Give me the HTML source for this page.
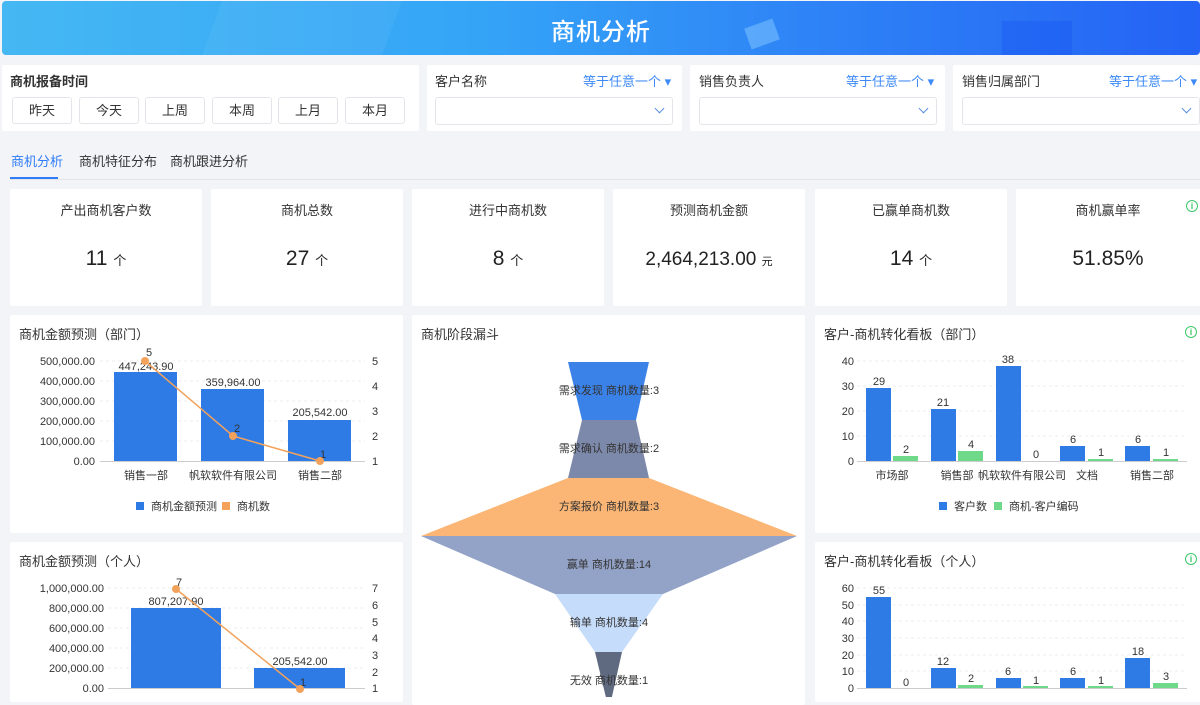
<!DOCTYPE html>
<html><head><meta charset="utf-8"><style>
*{margin:0;padding:0;box-sizing:border-box}
body{width:1200px;height:697px;overflow:hidden;background:#f3f4f8;font-family:"Liberation Sans","Noto Sans CJK SC",sans-serif;position:relative;color:#333}
.a{position:absolute}
.card{position:absolute;background:#fff;border-radius:2px}
.hdr{left:2px;top:1px;width:1198px;height:54px;border-radius:4px;background:linear-gradient(90deg,#45b8f3 0%,#34a4f7 40%,#2f86f6 65%,#2463f5 100%);overflow:hidden}
.hdr h1{position:absolute;left:0;right:0;top:11px;text-align:center;color:#fff;font-size:24px;font-weight:500;font-family:"Noto Sans CJK SC",sans-serif;letter-spacing:1px}
.btn{position:absolute;top:32px;width:60px;height:27px;border:1px solid #e3e5ea;border-radius:3px;font-size:13px;text-align:center;line-height:25px;color:#333}
.fl{font-size:13px;color:#333;position:absolute;top:6px}
.eq{font-size:13px;color:#3d8af7;position:absolute;top:6px}
.sel{position:absolute;top:32px;height:28px;border:1px solid #e3e5ea;border-radius:3px}
.chev{position:absolute;right:9px;top:7px;width:7px;height:7px;border-right:1.5px solid #5a8fe0;border-bottom:1.5px solid #5a8fe0;transform:rotate(45deg)}
.kt{position:absolute;top:11px;left:0;right:0;text-align:center;font-size:13px;color:#333}
.kv{position:absolute;top:58px;left:0;right:0;text-align:center;font-size:21px;color:#222}
.kv small{font-size:13px}
.ct{position:absolute;left:9px;top:9px;font-size:13px;color:#333}
.info{position:absolute;width:12px;height:12px;border:1.3px solid #3ec86a;border-radius:50%;color:#3ec86a;font-size:9px;line-height:10px;text-align:center;font-weight:bold}
svg text{font-family:"Liberation Sans","Noto Sans CJK SC",sans-serif}
</style></head><body>
<div class="a hdr">
<div class="a" style="left:210px;top:0;width:180px;height:54px;background:rgba(255,255,255,0.05);transform:skewX(-20deg)"></div>
<div class="a" style="left:745px;top:22px;width:30px;height:22px;background:rgba(120,190,255,0.6);transform:rotate(-20deg)"></div>
<div class="a" style="left:1000px;top:20px;width:70px;height:36px;background:rgba(20,80,240,0.3)"></div>
<h1>商机分析</h1></div>

<div class="card" style="left:2px;top:65px;width:417px;height:66px">
<div class="fl" style="left:8px;font-weight:600">商机报备时间</div>
<div class="btn" style="left:10px">昨天</div><div class="btn" style="left:77px">今天</div><div class="btn" style="left:143px">上周</div><div class="btn" style="left:210px">本周</div><div class="btn" style="left:276px">上月</div><div class="btn" style="left:343px">本月</div>
</div>
<div class="card" style="left:427px;top:65px;width:255px;height:66px"><div class="fl" style="left:8px">客户名称</div><div class="eq" style="left:156px">等于任意一个 ▾</div><div class="sel" style="left:8px;width:238px"><div class="chev"></div></div></div>
<div class="card" style="left:690px;top:65px;width:255px;height:66px"><div class="fl" style="left:9px">销售负责人</div><div class="eq" style="left:156px">等于任意一个 ▾</div><div class="sel" style="left:9px;width:238px"><div class="chev"></div></div></div>
<div class="card" style="left:953px;top:65px;width:247px;height:66px"><div class="fl" style="left:9px">销售归属部门</div><div class="eq" style="left:156px">等于任意一个 ▾</div><div class="sel" style="left:9px;width:238px"><div class="chev"></div></div></div>

<div class="a" style="left:11px;top:151px;font-size:13px;color:#2f7cf6">商机分析</div>
<div class="a" style="left:79px;top:151px;font-size:13px">商机特征分布</div>
<div class="a" style="left:170px;top:151px;font-size:13px">商机跟进分析</div>
<div class="a" style="left:10px;top:179px;width:1190px;height:1px;background:#e2e4ea"></div>
<div class="a" style="left:10px;top:177px;width:48px;height:2px;background:#2f7cf6"></div>

<div class="card" style="left:10px;top:189px;width:192px;height:117px"><div class="kt">产出商机客户数</div><div class="kv">11 <small>个</small></div></div>
<div class="card" style="left:211px;top:189px;width:192px;height:117px"><div class="kt">商机总数</div><div class="kv">27 <small>个</small></div></div>
<div class="card" style="left:412px;top:189px;width:192px;height:117px"><div class="kt">进行中商机数</div><div class="kv">8 <small>个</small></div></div>
<div class="card" style="left:613px;top:189px;width:192px;height:117px"><div class="kt">预测商机金额</div><div class="kv" style="font-size:19px;top:60px">2,464,213.00 <small style="font-size:11px">元</small></div></div>
<div class="card" style="left:815px;top:189px;width:192px;height:117px"><div class="kt">已赢单商机数</div><div class="kv">14 <small>个</small></div></div>
<div class="card" style="left:1016px;top:189px;width:184px;height:117px"><div class="kt">商机赢单率</div><div class="kv">51.85%</div><div class="info" style="left:170px;top:11px">i</div></div>

<div class="card" style="left:10px;top:315px;width:393px;height:218px"><div class="ct">商机金额预测（部门）</div></div>
<div class="card" style="left:10px;top:542px;width:393px;height:160px"><div class="ct">商机金额预测（个人）</div></div>
<div class="card" style="left:412px;top:315px;width:393px;height:390px"><div class="ct">商机阶段漏斗</div></div>
<div class="card" style="left:815px;top:315px;width:385px;height:218px"><div class="ct">客户-商机转化看板（部门）</div><div class="info" style="left:370px;top:11px">i</div></div>
<div class="card" style="left:815px;top:542px;width:385px;height:160px"><div class="ct">客户-商机转化看板（个人）</div><div class="info" style="left:370px;top:11px">i</div></div>

<svg class="a" style="left:0;top:0" width="1200" height="697" font-size="11" fill="#333">
<g stroke="#eee" stroke-dasharray="3,3"><line x1="100" y1="361" x2="365" y2="361"/><line x1="100" y1="381" x2="365" y2="381"/><line x1="100" y1="401" x2="365" y2="401"/><line x1="100" y1="421" x2="365" y2="421"/><line x1="100" y1="441" x2="365" y2="441"/></g>
<line x1="100" y1="461.5" x2="365" y2="461.5" stroke="#ccc"/>
<g text-anchor="end"><text x="95" y="365">500,000.00</text><text x="95" y="385">400,000.00</text><text x="95" y="405">300,000.00</text><text x="95" y="425">200,000.00</text><text x="95" y="445">100,000.00</text><text x="95" y="465">0.00</text></g>
<g><text x="372" y="365">5</text><text x="372" y="390">4</text><text x="372" y="415">3</text><text x="372" y="440">2</text><text x="372" y="465">1</text></g>
<g fill="#2e7be6"><rect x="114" y="372" width="63" height="89"/><rect x="201" y="389" width="63" height="72"/><rect x="288" y="420" width="63" height="41"/></g>
<g text-anchor="middle"><text x="146" y="370">447,243.90</text><text x="233" y="386">359,964.00</text><text x="320" y="416">205,542.00</text><text x="149" y="356">5</text><text x="237" y="432">2</text><text x="323" y="458">1</text>
<text x="146" y="479">销售一部</text><text x="233" y="479">帆软软件有限公司</text><text x="320" y="479">销售二部</text></g>
<polyline points="145,361 233,436 320,461" fill="none" stroke="#f3a25c" stroke-width="1.5"/>
<g fill="#f3a25c"><circle cx="145" cy="361" r="4"/><circle cx="233" cy="436" r="4"/><circle cx="320" cy="461" r="4"/></g>
<rect x="136" y="502" width="8" height="8" fill="#2e7be6"/><text x="151" y="510">商机金额预测</text>
<rect x="222" y="502" width="8" height="8" fill="#f3a25c"/><text x="237" y="510">商机数</text>
<g stroke="#eee" stroke-dasharray="3,3"><line x1="108" y1="588" x2="365" y2="588"/><line x1="108" y1="608" x2="365" y2="608"/><line x1="108" y1="628" x2="365" y2="628"/><line x1="108" y1="648" x2="365" y2="648"/><line x1="108" y1="668" x2="365" y2="668"/></g>
<line x1="108" y1="688.5" x2="365" y2="688.5" stroke="#ccc"/>
<g text-anchor="end"><text x="104" y="592">1,000,000.00</text><text x="104" y="612">800,000.00</text><text x="104" y="632">600,000.00</text><text x="104" y="652">400,000.00</text><text x="104" y="672">200,000.00</text><text x="104" y="692">0.00</text></g>
<g><text x="372" y="592">7</text><text x="372" y="609">6</text><text x="372" y="626">5</text><text x="372" y="642">4</text><text x="372" y="659">3</text><text x="372" y="676">2</text><text x="372" y="692">1</text></g>
<g fill="#2e7be6"><rect x="131" y="608" width="90" height="80"/><rect x="254" y="668" width="91" height="20"/></g>
<g text-anchor="middle"><text x="176" y="605">807,207.90</text><text x="300" y="665">205,542.00</text><text x="179" y="586">7</text><text x="303" y="686">1</text></g>
<polyline points="176,589 300,689" fill="none" stroke="#f3a25c" stroke-width="1.5"/>
<g fill="#f3a25c"><circle cx="176" cy="589" r="4"/><circle cx="300" cy="689" r="4"/></g>
<polygon points="568,362 649,362 636,420 582,420" fill="#3b82e8"/>
<polygon points="582,420 636,420 649,478 568,478" fill="#7d89aa"/>
<polygon points="568,478 649,478 797,536 421,536" fill="#fbb574"/>
<polygon points="421,536 797,536 663,594 555,594" fill="#93a3c7"/>
<polygon points="555,594 663,594 622,652 595,652" fill="#c6dcfb"/>
<polygon points="595,652 622,652 609,710" fill="#5f6a80"/>
<g text-anchor="middle" fill="#333"><text x="609" y="394">需求发现 商机数量:3</text><text x="609" y="452">需求确认 商机数量:2</text><text x="609" y="510">方案报价 商机数量:3</text><text x="609" y="568">赢单 商机数量:14</text><text x="609" y="626">输单 商机数量:4</text><text x="609" y="684">无效 商机数量:1</text></g>
<g stroke="#eee" stroke-dasharray="3,3"><line x1="857" y1="361" x2="1187" y2="361"/><line x1="857" y1="386" x2="1187" y2="386"/><line x1="857" y1="411" x2="1187" y2="411"/><line x1="857" y1="436" x2="1187" y2="436"/></g>
<line x1="857" y1="461.5" x2="1187" y2="461.5" stroke="#ccc"/>
<g text-anchor="end"><text x="854" y="365">40</text><text x="854" y="390">30</text><text x="854" y="415">20</text><text x="854" y="440">10</text><text x="854" y="465">0</text></g>
<g fill="#2e7be6"><rect x="866" y="388" width="25" height="73"/><rect x="931" y="409" width="25" height="52"/><rect x="996" y="366" width="25" height="95"/><rect x="1060" y="446" width="25" height="15"/><rect x="1125" y="446" width="25" height="15"/></g>
<g fill="#6fd98a"><rect x="893" y="456" width="25" height="5"/><rect x="958" y="451" width="25" height="10"/><rect x="1088" y="459" width="25" height="2"/><rect x="1153" y="459" width="25" height="2"/></g>
<g text-anchor="middle"><text x="879" y="385">29</text><text x="906" y="453">2</text><text x="943" y="406">21</text><text x="971" y="448">4</text><text x="1008" y="363">38</text><text x="1036" y="458">0</text><text x="1073" y="443">6</text><text x="1101" y="456">1</text><text x="1138" y="443">6</text><text x="1166" y="456">1</text>
<text x="892" y="479">市场部</text><text x="957" y="479">销售部</text><text x="1022" y="479">帆软软件有限公司</text><text x="1087" y="479">文档</text><text x="1152" y="479">销售二部</text></g>
<rect x="939" y="502" width="8" height="8" fill="#2e7be6"/><text x="954" y="510">客户数</text>
<rect x="994" y="502" width="8" height="8" fill="#6fd98a"/><text x="1009" y="510">商机-客户编码</text>
<g stroke="#eee" stroke-dasharray="3,3"><line x1="857" y1="588" x2="1187" y2="588"/><line x1="857" y1="605" x2="1187" y2="605"/><line x1="857" y1="621" x2="1187" y2="621"/><line x1="857" y1="638" x2="1187" y2="638"/><line x1="857" y1="655" x2="1187" y2="655"/><line x1="857" y1="671" x2="1187" y2="671"/></g>
<line x1="857" y1="688.5" x2="1187" y2="688.5" stroke="#ccc"/>
<g text-anchor="end"><text x="854" y="592">60</text><text x="854" y="609">50</text><text x="854" y="625">40</text><text x="854" y="642">30</text><text x="854" y="659">20</text><text x="854" y="675">10</text><text x="854" y="692">0</text></g>
<g fill="#2e7be6"><rect x="866" y="597" width="25" height="91"/><rect x="931" y="668" width="25" height="20"/><rect x="996" y="678" width="25" height="10"/><rect x="1060" y="678" width="25" height="10"/><rect x="1125" y="658" width="25" height="30"/></g>
<g fill="#6fd98a"><rect x="958" y="685" width="25" height="3"/><rect x="1023" y="686" width="25" height="2"/><rect x="1088" y="686" width="25" height="2"/><rect x="1153" y="683" width="25" height="5"/></g>
<g text-anchor="middle"><text x="879" y="594">55</text><text x="906" y="686">0</text><text x="943" y="665">12</text><text x="971" y="682">2</text><text x="1008" y="675">6</text><text x="1036" y="684">1</text><text x="1073" y="675">6</text><text x="1101" y="684">1</text><text x="1138" y="655">18</text><text x="1166" y="680">3</text></g>
</svg>
</body></html>
